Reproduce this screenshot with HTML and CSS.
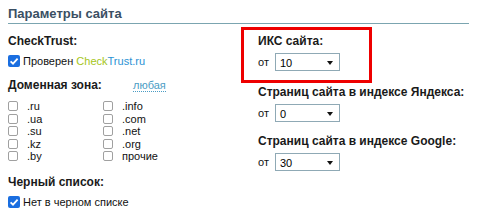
FILE: index.html
```html
<!DOCTYPE html>
<html lang="ru">
<head>
<meta charset="utf-8">
<title>Параметры сайта</title>
<link rel="stylesheet" href="styles.css">
</head>
<body>
<div class="panel">
  <h2 class="title">Параметры сайта</h2>
  <div class="cols">
    <div class="col-left">
      <div class="label">CheckTrust:</div>
      <div class="check-row">
        <span class="cb cb-on"><svg viewBox="0 0 12 12" width="12" height="12"><path d="M2.6 6.3 L5 8.6 L9.6 3.6" fill="none" stroke="#fff" stroke-width="1.8"/></svg></span>
        <span>Проверен <span class="ct-g">Check</span><span class="ct-b">Trust.ru</span></span>
      </div>

      <div class="label-row label-gap">
        <span class="label">Доменная зона:</span>
        <span class="any">любая</span>
      </div>
      <div class="zones">
        <div class="zone"><span class="cb"></span><span>.ru</span></div>
        <div class="zone"><span class="cb"></span><span>.info</span></div>
        <div class="zone"><span class="cb"></span><span>.ua</span></div>
        <div class="zone"><span class="cb"></span><span>.com</span></div>
        <div class="zone"><span class="cb"></span><span>.su</span></div>
        <div class="zone"><span class="cb"></span><span>.net</span></div>
        <div class="zone"><span class="cb"></span><span>.kz</span></div>
        <div class="zone"><span class="cb"></span><span>.org</span></div>
        <div class="zone"><span class="cb"></span><span>.by</span></div>
        <div class="zone"><span class="cb"></span><span>прочие</span></div>
      </div>

      <div class="label label-gap2">Черный список:</div>
      <div class="check-row">
        <span class="cb cb-on"><svg viewBox="0 0 12 12" width="12" height="12"><path d="M2.6 6.3 L5 8.6 L9.6 3.6" fill="none" stroke="#fff" stroke-width="1.8"/></svg></span>
        <span>Нет в черном списке</span>
      </div>
    </div>

    <div class="col-right">
      <div class="highlight">
        <div class="label">ИКС сайта:</div>
        <div class="from-row">
          <span>от</span>
          <div class="select"><span>10</span><span class="arrow"></span></div>
        </div>
      </div>
      <div class="field">
        <div class="label">Страниц сайта в индексе Яндекса:</div>
        <div class="from-row">
          <span>от</span>
          <div class="select"><span>0</span><span class="arrow"></span></div>
        </div>
      </div>
      <div class="field field-gap">
        <div class="label">Страниц сайта в индексе Google:</div>
        <div class="from-row">
          <span>от</span>
          <div class="select"><span>30</span><span class="arrow"></span></div>
        </div>
      </div>
    </div>
  </div>
</div>
</body>
</html>
```

FILE: styles.css
```css
html, body {
  margin: 0;
  padding: 0;
  background: #fff;
}

body {
  font-family: "Liberation Sans", Arial, sans-serif;
  font-size: 11px;
  color: #111;
}

.panel {
  padding: 6px 19px 0 8px;
}

.title {
  margin: 0;
  font-size: 13px;
  line-height: 16px;
  font-weight: bold;
  color: #3a4f63;
  padding-bottom: 1px;
  border-bottom: 1px solid #7ba5b0;
}

.cols {
  display: grid;
  grid-template-columns: 233px 131px;
}

.col-left {
  padding-top: 10px;
}

.label {
  font-weight: bold;
  font-size: 12px;
  line-height: 15px;
  color: #1a1a1a;
}

.check-row {
  display: flex;
  align-items: center;
  gap: 3px;
  height: 14px;
  margin-top: 5px;
}

.cb {
  display: inline-block;
  box-sizing: border-box;
  width: 10px;
  height: 10px;
  border: 1px solid #a0a0a0;
  border-radius: 2px;
  background: #fff;
  flex: none;
}

.cb-on {
  width: 12px;
  height: 12px;
  border: none;
  border-radius: 2px;
  background: #1a6ee0;
  display: flex;
}

.ct-g {
  color: #a5c520;
}

.ct-b {
  color: #2b92d4;
}

.label-row {
  display: flex;
  align-items: baseline;
}

.label-gap {
  margin-top: 10px;
}

.label-row .label {
  width: 125px;
}

.any {
  color: #4a9cc4;
  border-bottom: 1px dotted #4a9cc4;
  line-height: 12px;
}

.zones {
  display: grid;
  grid-template-columns: 95px 95px;
  grid-auto-rows: 12.5px;
  margin-top: 7px;
}

.zone {
  display: flex;
  align-items: center;
  line-height: 12.5px;
}

.zone .cb {
  margin-right: 9px;
}

.label-gap2 {
  margin-top: 12px;
}

.col-right {
  padding-top: 3px;
}

.highlight {
  border: 3px solid #ee0000;
  padding: 4px 14px 9px 14px;
}

.field {
  padding-left: 17px;
  margin-top: 2px;
  white-space: nowrap;
}

.field-gap {
  margin-top: 12px;
}

.from-row {
  display: flex;
  align-items: center;
  gap: 6px;
  margin-top: 4px;
  height: 18px;
}

.select {
  box-sizing: border-box;
  width: 65px;
  height: 18px;
  border: 1px solid #8fa9b5;
  background: #fff;
  display: flex;
  align-items: center;
  justify-content: space-between;
  padding: 1px 6px 0 4px;
  color: #000;
}

.arrow {
  width: 0;
  height: 0;
  border-left: 3.5px solid transparent;
  border-right: 3.5px solid transparent;
  border-top: 4px solid #111;
}
```
